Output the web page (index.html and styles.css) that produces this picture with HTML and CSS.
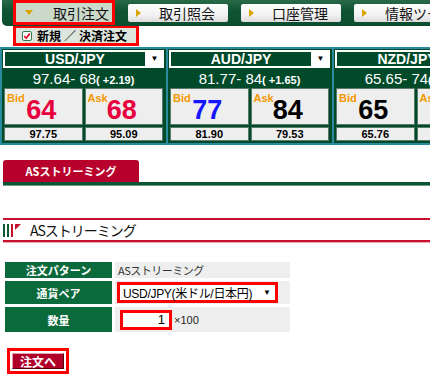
FILE: index.html
```html
<!DOCTYPE html>
<html lang="ja">
<head>
<meta charset="utf-8">
<link rel="stylesheet" href="styles.css">
</head>
<body>
<div class="page">
  <div class="nav">
    <div class="tab active"><span class="tri tri-down"></span>取引注文</div>
    <div class="tab"><span class="tri tri-right"></span>取引照会</div>
    <div class="tab"><span class="tri tri-right"></span>口座管理</div>
    <div class="tab"><span class="tri tri-right"></span>情報ツール</div>
  </div>
  <div class="subnav">
    <div class="subtab">
      <svg class="chk" width="10" height="10" viewBox="0 0 10 10"><rect x="0.5" y="0.5" width="9" height="9" rx="1.5" fill="#fff" stroke="#2f7d4f"/><path d="M2.2 5.2 L4.2 7.2 L7.8 2.6" fill="none" stroke="#e0102a" stroke-width="1.8"/></svg>
      <span>新規<span class="slash">／</span>決済注文</span>
    </div>
  </div>

  <div class="tiles">
    <div class="tile">
      <div class="head"><div class="pair">USD/JPY</div><div class="arrow">▼</div></div>
      <div class="rate">97.64- 68<span class="chg">( +2.19)</span></div>
      <div class="quotes">
        <div class="q"><span class="lbl">Bid</span><span class="num red">64</span></div>
        <div class="q"><span class="lbl">Ask</span><span class="num red">68</span></div>
        <div class="s">97.75</div>
        <div class="s">95.09</div>
      </div>
    </div>
    <div class="tile">
      <div class="head"><div class="pair">AUD/JPY</div><div class="arrow">▼</div></div>
      <div class="rate">81.77- 84<span class="chg">( +1.65)</span></div>
      <div class="quotes">
        <div class="q"><span class="lbl">Bid</span><span class="num blue">77</span></div>
        <div class="q"><span class="lbl">Ask</span><span class="num">84</span></div>
        <div class="s">81.90</div>
        <div class="s">79.53</div>
      </div>
    </div>
    <div class="tile">
      <div class="head"><div class="pair">NZD/JPY</div><div class="arrow">▼</div></div>
      <div class="rate">65.65- 74<span class="chg">( +1.00)</span></div>
      <div class="quotes">
        <div class="q"><span class="lbl">Bid</span><span class="num">65</span></div>
        <div class="q"><span class="lbl">Ask</span><span class="num">74</span></div>
        <div class="s">65.76</div>
        <div class="s">64.90</div>
      </div>
    </div>
  </div>

  <div class="redtab">ASストリーミング</div>
  <div class="greenline"></div>

  <div class="sechead">
    <svg class="secicon" width="22" height="13" viewBox="0 0 22 13">
      <rect x="0" y="0" width="2" height="13" fill="#0c5a34"/>
      <rect x="4" y="0" width="2" height="13" fill="#0c5a34"/>
      <rect x="8" y="0" width="2" height="13" fill="#c8102e"/>
      <polygon points="12,0 18,0 12,6" fill="#c8102e"/>
    </svg>
    <span class="sectitle">ASストリーミング</span>
  </div>

  <div class="form">
    <div class="fl">注文パターン</div>
    <div class="fv plain">ASストリーミング</div>
    <div class="fl">通貨ペア</div>
    <div class="fv"><div class="select"><span class="seltext">USD/JPY(米ドル/日本円)</span><span class="sarrow">▼</span></div></div>
    <div class="fl">数量</div>
    <div class="fv"><div class="qty">1</div><span class="unit">×100</span></div>
  </div>

  <div class="btnbox"><div class="btn">注文へ</div></div>
</div>
</body>
</html>
```
FILE: styles.css
```css
html, body {
  margin: 0;
  padding: 0;
  background: #fff;
}
body {
  width: 430px;
  height: 376px;
  overflow: hidden;
  font-family: "Liberation Sans", "Noto Sans CJK JP", sans-serif;
  color: #000;
}
.page {
  width: 430px;
}

/* top navigation */
.nav {
  margin-left: 2px;
  height: 26px;
  background: linear-gradient(#2a6a48, #0f5534 40%, #0b4e2f);
  border-bottom-left-radius: 5px;
  display: flex;
  align-items: center;
  gap: 13px;
  padding-left: 11px;
  overflow: hidden;
  white-space: nowrap;
}
.tab {
  flex: 0 0 100px;
  box-sizing: border-box;
  height: 18px;
  background: linear-gradient(#ffffff, #f2f2f2 60%, #dcdcdc);
  border-radius: 2px;
  font-family: "Noto Sans CJK JP", sans-serif;
  font-size: 14px;
  line-height: 18px;
  display: flex;
  align-items: center;
  padding-left: 8px;
  gap: 18px;
  color: #111;
}
.tab.active {
  flex: 0 0 102px;
  align-self: flex-start;
  height: 25px;
  border: 3px solid #f00;
  border-radius: 0;
  background: #cbd9cb;
  padding-left: 9px;
  gap: 20px;
}
.tri {
  width: 0;
  height: 0;
  flex: 0 0 auto;
}
.tri-right {
  border-top: 4px solid transparent;
  border-bottom: 4px solid transparent;
  border-left: 5px solid #d9a400;
}
.tri-down {
  border-left: 4px solid transparent;
  border-right: 4px solid transparent;
  border-top: 5px solid #d9a400;
}

/* sub navigation */
.subnav {
  height: 21px;
}
.subtab {
  margin-left: 13px;
  width: 126px;
  height: 20px;
  box-sizing: border-box;
  border: 3px solid #f00;
  border-top-width: 2px;
  background: #dde6dd;
  display: flex;
  align-items: center;
  gap: 5px;
  padding-left: 6px;
  font-family: "Noto Sans CJK JP", sans-serif;
  font-size: 12px;
  font-weight: bold;
  white-space: nowrap;
}
.slash {
  margin: 0 3px;
}
.chk {
  display: block;
  flex: 0 0 auto;
}

/* rate tiles */
.tiles {
  display: flex;
  height: 98px;
  overflow: hidden;
}
.tile {
  flex: 0 0 166px;
  box-sizing: border-box;
  height: 98px;
  border: 2px solid #2a8b9e;
  border-right: none;
  background: #004a2a;
  padding: 1px 2px 1px 1px;
}
.head {
  height: 18px;
  background: #fff;
  display: flex;
  padding: 2px 0 2px 2px;
  box-sizing: border-box;
}
.pair {
  flex: 1;
  background: #004a2a;
  color: #fff;
  font-weight: bold;
  font-size: 14px;
  line-height: 14px;
  text-align: center;
}
.arrow {
  width: 19px;
  font-size: 8px;
  line-height: 14px;
  text-align: center;
  color: #000;
}
.rate {
  height: 20px;
  color: #fff;
  font-size: 15px;
  line-height: 21px;
  text-align: center;
  white-space: nowrap;
}
.chg {
  font-size: 11px;
  font-weight: bold;
}
.quotes {
  display: grid;
  grid-template-columns: 1fr 1fr;
  grid-template-rows: 37px 14px;
  gap: 2px;
  padding: 0 1px;
}
.q {
  background: #eeeeee;
  border: 1px solid #5a7a6a;
  box-sizing: border-box;
  display: grid;
  grid-template-columns: 1fr;
  grid-template-rows: 1fr;
}
.lbl {
  grid-area: 1 / 1;
  align-self: start;
  justify-self: start;
  color: #f39800;
  font-weight: bold;
  font-size: 11px;
  line-height: 11px;
  padding: 4px 0 0 2px;
}
.num {
  grid-area: 1 / 1;
  align-self: end;
  justify-self: center;
  font-weight: bold;
  font-size: 27px;
  line-height: normal;
  color: #000;
  margin: 0 4px -2px 0;
}
.num.red { color: #e8003d; }
.num.blue { color: #1515ff; }
.s {
  background: #eeeeee;
  border: 1px solid #5a7a6a;
  box-sizing: border-box;
  font-weight: bold;
  font-size: 11px;
  line-height: 12px;
  text-align: center;
}

/* streaming tab */
.redtab {
  margin: 15px 0 0 3px;
  width: 136px;
  height: 22px;
  background: #b8002c;
  border-radius: 3px 3px 0 0;
  color: #fff;
  font-family: "Noto Sans CJK JP", sans-serif;
  font-weight: bold;
  font-size: 11px;
  line-height: 22px;
  text-align: center;
}
.greenline {
  margin-left: 3px;
  height: 3px;
  background: #0d5434;
  border-bottom: 1px solid #6f9c84;
}

/* section header */
.sechead {
  margin: 32px 0 0 3px;
  height: 20px;
  border-top: 2px solid #c8102e;
  border-bottom: 2px solid #c8102e;
  box-shadow: 0 1px 0 #f0a8b4;
  display: flex;
  align-items: center;
  gap: 5px;
}
.secicon {
  display: block;
}
.sectitle {
  font-family: "Noto Sans CJK JP", sans-serif;
  font-size: 14px;
  letter-spacing: -1px;
  line-height: 20px;
  color: #111;
}

/* form */
.form {
  margin: 20px 0 0 5px;
  display: grid;
  grid-template-columns: 107px 175px;
  grid-template-rows: 16px 23px 25px;
  column-gap: 3px;
  row-gap: 3px;
}
.fl {
  background: #0b6a3c;
  color: #fff;
  font-family: "Noto Sans CJK JP", sans-serif;
  font-weight: bold;
  font-size: 11px;
  display: flex;
  align-items: center;
  justify-content: center;
}
.fv {
  background: #eeeeee;
  display: flex;
  align-items: center;
  padding-left: 2px;
}
.fv.plain {
  padding-left: 3px;
  font-family: "Noto Sans CJK JP", sans-serif;
  font-size: 11px;
  letter-spacing: -0.5px;
  color: #333;
}
.select {
  width: 161px;
  height: 21px;
  box-sizing: border-box;
  border: 3px solid #f00;
  background: #fff;
  display: flex;
  align-items: center;
  justify-content: space-between;
  padding: 0 4px 0 3px;
  white-space: nowrap;
}
.seltext {
  font-size: 12px;
  letter-spacing: -0.3px;
}
.sarrow {
  font-size: 8px;
}
.qty {
  margin-left: 3px;
  width: 52px;
  height: 20px;
  box-sizing: border-box;
  border: 3px solid #f00;
  background: #fff;
  text-align: right;
  padding-right: 4px;
  font-size: 13px;
  line-height: 14px;
}
.unit {
  margin-left: 2px;
  font-size: 11px;
  color: #222;
}

/* button */
.btnbox {
  margin: 16px 0 0 7px;
  width: 62px;
  height: 26px;
  box-sizing: border-box;
  border: 3px solid #f00;
  padding: 2px;
}
.btn {
  height: 100%;
  box-sizing: border-box;
  background: #b0002a;
  border-top: 1px solid #e8a0ac;
  border-left: 1px solid #e8a0ac;
  border-bottom: 1px solid #5a0014;
  border-right: 1px solid #5a0014;
  color: #fff;
  font-family: "Noto Sans CJK JP", sans-serif;
  font-weight: bold;
  font-size: 12px;
  line-height: 15px;
  text-align: center;
}
```
